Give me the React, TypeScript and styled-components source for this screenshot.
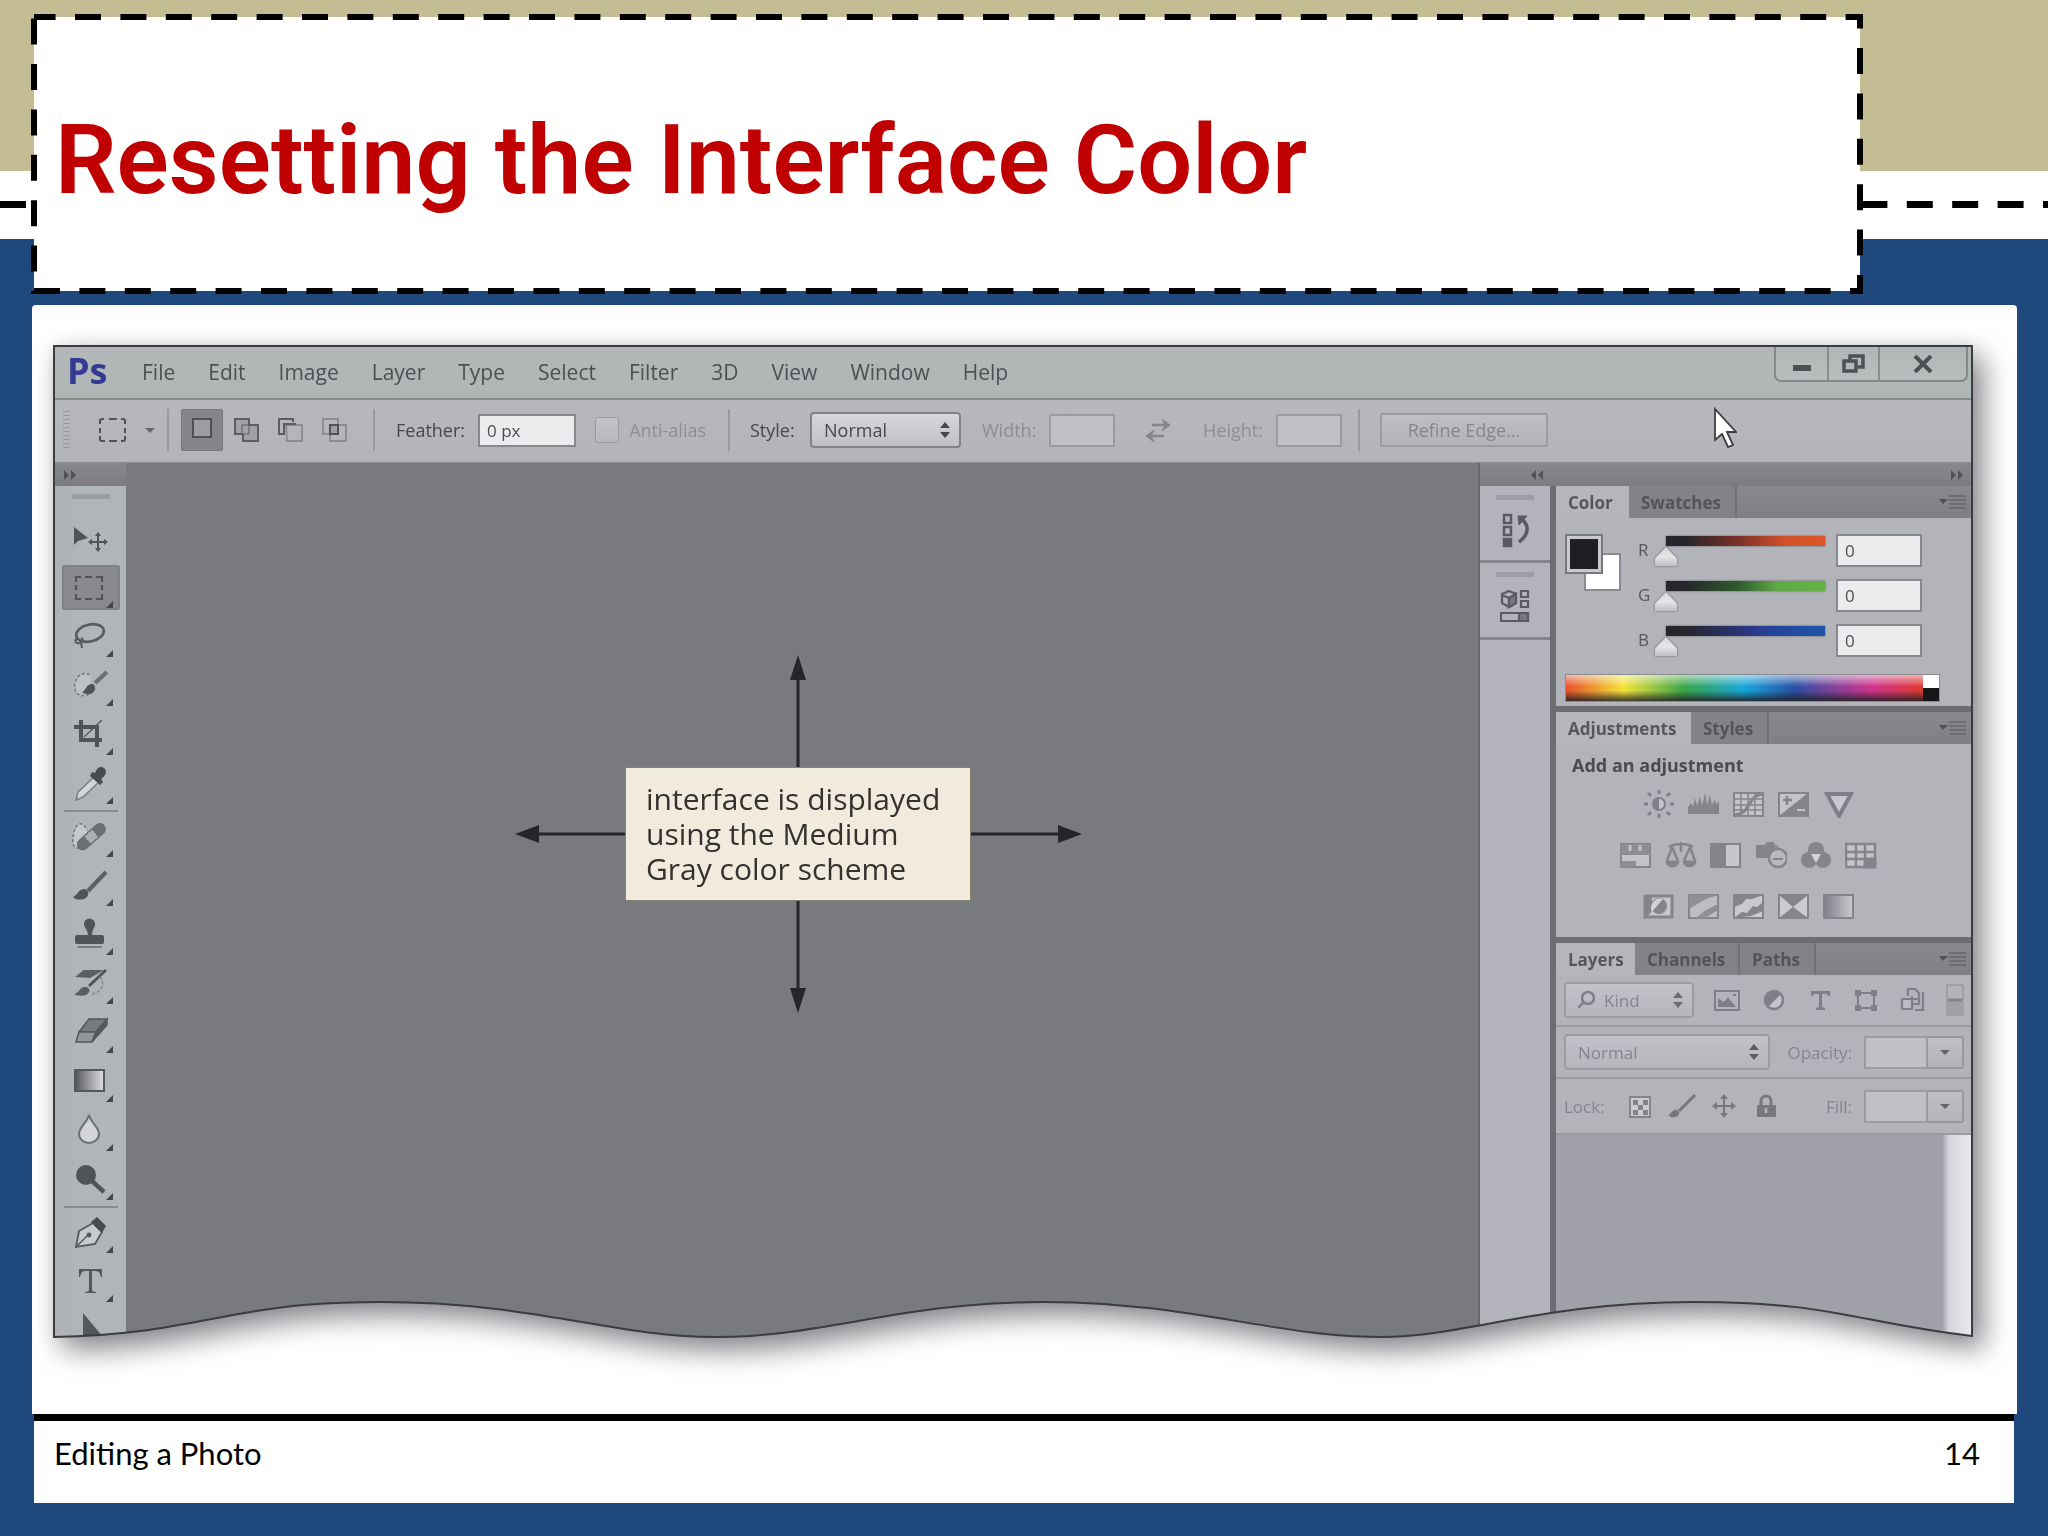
import React from "react";
import styled, { createGlobalStyle, css } from "styled-components";

const uiFont = `"Open Sans", "Noto Sans", sans-serif`;
const ink = "#55595d";
const faded = "#85868d";

const GlobalStyle = createGlobalStyle`
  *, *::before, *::after { box-sizing: border-box; }
  body { margin: 0; background: #1f497d; }
  button, input, select { font: inherit; color: inherit; margin: 0; border-radius: 0; }
  button { padding: 0; border: 0; background: none; cursor: pointer; }
  svg { display: block; }
`;

/* ---------- slide ---------- */

const Slide = styled.div`
  min-height: 100vh;
  display: flex;
  flex-direction: column;
  background: #1f497d;
  font-family: ${uiFont};
`;

const SlideHeader = styled.header`
  position: relative;
  padding: 14px 185px 11px 31px;
  background: linear-gradient(#c4bd93 171px, #fff 171px, #fff 239px, #1f497d 239px);
`;

const BandDashes = styled.svg`
  position: absolute;
  left: 0;
  top: 201px;
  width: 100%;
  height: 7px;
`;

const TitleBox = styled.div`
  position: relative;
  height: 280px;
  padding: 3px;
`;

const TitleFill = styled.div`
  height: 100%;
  display: flex;
  align-items: center;
  padding: 12px 21px 0;
  background: #fff;
`;

const TitleDashes = styled.svg`
  position: absolute;
  inset: 3px;
  width: calc(100% - 6px);
  height: calc(100% - 6px);
  overflow: visible;
`;

const Title = styled.h1`
  margin: 0;
  color: #c00000;
  font: 600 97px/112px Roboto, "Liberation Sans", sans-serif;
`;

const Figure = styled.main`
  margin: 0 31px 0 32px;
  padding: 40px 44px 76px 21px;
  background: #fff;
  border-radius: 4px 4px 0 0;
`;

const SlideFooter = styled.footer`
  display: flex;
  justify-content: space-between;
  margin: 0 34px 34px;
  padding: 12px 34px 28px 20px;
  height: 89px;
  border-top: 7px solid #000;
  background: #fff;
  color: #000;
  font: 400 31px/40px Lato, sans-serif;
`;

/* ---------- application window ---------- */

const WindowShadow = styled.div`
  position: relative;
  filter: drop-shadow(10px 12px 14px rgba(60, 60, 70, 0.6)) drop-shadow(0 0 8px rgba(120, 110, 100, 0.12));
`;

const AppWindow = styled.div`
  display: flex;
  flex-direction: column;
  border: 2px solid #3b3b40;
  border-bottom: 0;
  background: #b2b4b8;
  clip-path: url(#torn-edge);
  color: ${ink};
`;

const ShapeDefs = styled.svg`
  position: absolute;
`;

const TornOutline = styled.svg`
  position: absolute;
  inset: 0;
  width: 100%;
  height: 100%;
  pointer-events: none;
`;

const MenuBar = styled.nav`
  display: flex;
  align-items: flex-start;
  height: 53px;
  padding-left: 12px;
  background: linear-gradient(#b6b5b9, #b0b7b6 14px, #b0b6b6);
  border-bottom: 2px solid #88898d;
`;

const Logo = styled.span`
  width: 75px;
  color: #333a94;
  font-size: 36px;
  font-weight: 700;
  line-height: 48px;
`;

const Menus = styled.div`
  display: flex;
  flex: 1;
  gap: 33px;
`;

const MenuButton = styled.button`
  font-size: 21px;
  line-height: 50px;
  color: #4a5153;
`;

const WindowControls = styled.div`
  display: flex;
  height: 35px;
  margin-right: 3px;
  border: 2px solid #85878a;
  border-top: 0;
  border-radius: 0 0 7px 7px;
  background: linear-gradient(#b1b5b5, #b9bdbd);
`;

const ControlButton = styled.button<{ $wide?: boolean }>`
  width: ${(p) => (p.$wide ? 88 : 51)}px;
  display: flex;
  align-items: center;
  justify-content: center;
  & + & { border-left: 2px solid #8a8c8f; }
`;

const OptionsBar = styled.div`
  position: relative;
  display: flex;
  align-items: center;
  height: 63px;
  padding: 0 0 2px 8px;
  font-size: 18px;
  background: linear-gradient(#b6b8bc, #b2b4b9);
  border-bottom: 1px solid #8b8c90;
`;

const Grip = styled.span`
  width: 7px;
  height: 38px;
  background: repeating-linear-gradient(#96989c 0 1px, transparent 1px 4px);
`;

const IconButton = styled.button<{ $ml?: number; $w: number }>`
  display: flex;
  justify-content: center;
  width: ${(p) => p.$w}px;
  margin-left: ${(p) => p.$ml ?? 0}px;
`;

const ModeGroup = styled.div`
  display: flex;
  gap: 2px;
  margin: 0 18px 0 12px;
`;

const ModeButton = styled.button<{ $on?: boolean }>`
  display: flex;
  align-items: center;
  justify-content: center;
  width: 42px;
  height: 42px;
  border-radius: 3px;
  ${(p) => p.$on && css`background: #84868a; box-shadow: inset 0 0 0 1px #77797d;`}
`;

const Divider = styled.span<{ $ml?: number }>`
  width: 2px;
  height: 42px;
  margin-left: ${(p) => p.$ml ?? 0}px;
  background: #989a9e;
`;

const Field = styled.div<{ $ml: number; $w: number; $off?: boolean }>`
  display: flex;
  align-items: center;
  justify-content: space-between;
  width: ${(p) => p.$w}px;
  margin-left: ${(p) => p.$ml}px;
  white-space: nowrap;
  color: ${(p) => (p.$off ? "#8c8e94" : "#45484c")};
`;

const TextBox = styled.input<{ $w: number; $off?: boolean }>`
  width: ${(p) => p.$w}px;
  height: 33px;
  padding: 0 7px;
  border: 2px solid ${(p) => (p.$off ? "#9b9ca2" : "#87888d")};
  background: ${(p) => (p.$off ? "#c0c1c7" : "#ecebee")};
  color: #4c4d51;
  font-size: 17px;
`;

const CheckBox = styled.input`
  appearance: none;
  width: 24px;
  height: 26px;
  border: 1px solid #9b9ca0;
  border-radius: 3px;
  background: linear-gradient(#c3c4c8, #b7b8bc);
`;

const SelectFrame = styled.span<{ $w: number; $off?: boolean }>`
  display: flex;
  align-items: center;
  width: ${(p) => p.$w}px;
  height: 36px;
  padding: 0 8px 0 12px;
  border: 2px solid ${(p) => (p.$off ? "#9b9ca2" : "#808287")};
  border-radius: 4px;
  background: ${(p) => (p.$off ? "linear-gradient(#c2c3c9, #b5b6bc)" : "linear-gradient(#d6d7db, #bfc0c4)")};
`;

const Select = styled.select`
  flex: 1;
  min-width: 0;
  appearance: none;
  border: 0;
  padding: 0;
  background: none;
  opacity: 1;
`;

const PushButton = styled.button`
  width: 168px;
  height: 34px;
  margin-left: 20px;
  border: 2px solid #9c9da2;
  border-radius: 2px;
  background: linear-gradient(#bebfc4, #b3b4b9);
  color: #85878d;
`;

const Pointer = styled.svg`
  position: absolute;
  right: 234px;
  top: 7px;
`;

const Workspace = styled.div`
  display: flex;
  background: #797a7e;
`;

/* ---------- toolbox ---------- */

const Toolbox = styled.aside`
  width: 71px;
  background: linear-gradient(90deg, #aeb0b6, #b0b5b7 30%);
`;

const StripHeader = styled.div`
  display: flex;
  align-items: center;
  justify-content: space-between;
  height: 23px;
  padding: 0 8px;
  background: linear-gradient(#87898d, #7a7c80);
`;

const PanelGrip = styled.span<{ $gap: number }>`
  display: block;
  width: 38px;
  height: 5px;
  margin: 8px auto ${(p) => p.$gap}px;
  background: #9c9ea3;
`;

const Tool = styled.button<{ $on?: boolean; $cut?: boolean }>`
  position: relative;
  display: flex;
  align-items: ${(p) => (p.$cut ? "flex-start" : "center")};
  justify-content: center;
  width: 58px;
  height: ${(p) => (p.$cut ? 30 : 45)}px;
  margin: 0 auto 4px 7px;
  padding: 0 2px 2px 0;
  border-radius: 3px;
  ${(p) => p.$on && css`background: #888a8f; box-shadow: inset 0 0 0 2px #7f8186;`}
  ${(p) => p.$cut && css`margin-bottom: 0; padding-top: 5px;`}
`;

const FlyoutMark = styled.svg`
  position: absolute;
  right: 7px;
  bottom: 2px;
`;

const ToolRule = styled.hr`
  width: 54px;
  height: 2px;
  margin: 0 auto 2px 9px;
  border: 0;
  background: #888a8e;
`;

/* ---------- canvas ---------- */

const Canvas = styled.section`
  flex: 1;
  display: flex;
  justify-content: center;
  align-items: flex-start;
  padding: 192px 8px 0 0;
  border-right: 2px solid #66676c;
`;

const Callout = styled.div`
  position: relative;
  display: flex;
  align-items: center;
  justify-content: center;
  width: 567px;
  height: 358px;
`;

const CalloutArrows = styled.svg`
  position: absolute;
  inset: 0;
`;

const CalloutText = styled.p`
  position: relative;
  width: 346px;
  margin: 0;
  padding: 13px 20px 14px;
  border: 1px solid #85836f;
  background: #f0ebdd;
  color: #34322f;
  font: 500 30px/35px ${uiFont};
`;

/* ---------- right dock ---------- */

const Dock = styled.aside`
  display: flex;
  flex-direction: column;
  width: 491px;
`;

const DockHeader = styled(StripHeader)`
  padding: 0 7px 0 50px;
`;

const DockColumns = styled.div`
  flex: 1;
  display: flex;
`;

const IconDock = styled.div`
  width: 70px;
  background: #b3b4bb;
`;

const DockSlot = styled.div`
  height: 77px;
  padding-top: 1px;
  border-bottom: 3px solid #85868c;
`;

const DockIcon = styled.button`
  display: block;
  margin: 0 auto;
`;

const Panels = styled.div`
  flex: 1;
  display: flex;
  flex-direction: column;
  gap: 6px;
  border-left: 6px solid #6c6d73;
  background: #6c6d73;
`;

const Panel = styled.section<{ $grow?: boolean }>`
  display: flex;
  flex-direction: column;
  background: #b3b4ba;
  ${(p) => p.$grow && css`flex: 1;`}
`;

const Tabs = styled.div`
  display: flex;
  height: 32px;
  background: linear-gradient(#88898e, #7f8085);
`;

const Tab = styled.button<{ $w: number; $on?: boolean }>`
  width: ${(p) => p.$w}px;
  padding: 0 0 0 12px;
  text-align: left;
  font-size: 17px;
  font-weight: 700;
  color: ${(p) => (p.$on ? "#55575c" : "#53545a")};
  ${(p) => (p.$on ? css`background: #b5b6bb;` : css`border-right: 2px solid #717277; background: #828388;`)}
`;

const PanelMenu = styled.button`
  margin: 0 4px 0 auto;
`;

const ColorBody = styled.div`
  display: grid;
  grid-template-columns: 73px 17px 181px 86px;
  grid-auto-rows: 34px;
  row-gap: 11px;
  padding: 16px 0 0 9px;
`;

const Swatches = styled.div`
  grid-row: 1 / span 3;
`;

const ChannelLabel = styled.label`
  font-size: 17px;
  line-height: 32px;
`;

const Slider = styled.input<{ $to: string }>`
  appearance: none;
  width: 181px;
  height: 31px;
  margin-top: 2px;
  background: linear-gradient(90deg, #25262b 12%, ${(p) => p.$to}) 11px 0 / calc(100% - 22px) 10px no-repeat;
  filter: drop-shadow(0 0 1px #5c5d62);
  &::-webkit-slider-runnable-track { height: 31px; }
  &::-webkit-slider-thumb {
    appearance: none;
    width: 22px;
    height: 19px;
    margin-top: 11px;
    background: linear-gradient(#d5d5d8, #e6e6e8 50%, #bdbec2);
    clip-path: polygon(50% 0, 100% 60%, 100% 100%, 0 100%, 0 60%);
  }
`;

const Spectrum = styled.div`
  display: flex;
  height: 28px;
  margin: 16px 31px 4px 9px;
  border: 1px solid #8b8c90;
`;

const SpectrumRamp = styled.div`
  flex: 1;
  background:
    linear-gradient(rgba(255,255,255,0.6), rgba(255,255,255,0) 45%, rgba(0,0,0,0) 60%, rgba(30,30,34,0.85)),
    linear-gradient(90deg, #e5502b, #f3e33a 16%, #3ba648 33%, #16a6dc 50%, #2950a4 64%, #8a3f98 76%, #d0348a 86%, #dd3a2e);
`;

const SpectrumEnds = styled.div`
  width: 16px;
  background: linear-gradient(#fff 50%, #161618 50%);
`;

const AdjustBody = styled.div`
  height: 193px;
  padding: 8px 30px 0 0;
`;

const AdjustTitle = styled.h2`
  margin: 0 0 0 16px;
  font-size: 18px;
  line-height: 26px;
  font-weight: 700;
  color: #494b50;
`;

const AdjustRow = styled.div`
  display: flex;
  justify-content: center;
  gap: 13px;
  height: 51px;
  align-items: center;
`;

const LayerRow = styled.div<{ $tall?: boolean }>`
  display: flex;
  align-items: center;
  justify-content: space-between;
  height: ${(p) => (p.$tall ? 56 : 52)}px;
  padding: 0 7px 0 8px;
  border-bottom: 2px solid #9a9ba1;
  color: ${faded};
  font-size: 17px;
`;

const LayerGroup = styled.div<{ $gap: number }>`
  display: flex;
  align-items: center;
  gap: ${(p) => p.$gap}px;
`;

const LockLabel = styled.span`
  width: 47px;
`;

const Combo = styled.span`
  display: flex;
`;

const ComboButton = styled.button`
  width: 36px;
  height: 33px;
  display: flex;
  align-items: center;
  justify-content: center;
  border: 2px solid #97989e;
  border-left: 0;
  border-radius: 0 3px 3px 0;
  background: linear-gradient(#bfc0c6, #b3b4ba);
`;

const LayerList = styled.div`
  flex: 1;
  background: linear-gradient(90deg, #a0a0a8 calc(100% - 29px), #d6d7dc calc(100% - 22px), #e8e9ed);
`;

/* ---------- drawings ---------- */

const windowShape =
  "M1 1H1919V990C1800 976 1780 956 1640 956C1490 956 1410 991 1329 991C1220 991 1140 956 989 956C850 956 770 991 663 991C560 991 480 956 328 956C170 956 150 988 1 991Z";

const Chevrons = ({ left }: { left?: boolean }) => (
  <svg width="14" height="10" viewBox="0 0 14 10" fill="#505257">
    {left ? <path d="M6 0v10L1 5zM13 0v10L8 5z" /> : <path d="M1 0v10l5-5zM8 0v10l5-5z" />}
  </svg>
);

const UpDown = ({ color = "#44474b" }: { color?: string }) => (
  <svg width="12" height="18" viewBox="0 0 12 18" fill={color}>
    <path d="M6 1l5 6H1zM6 17l5-6H1z" />
  </svg>
);

const Caret = ({ small }: { small?: boolean }) => (
  <svg width={small ? 10 : 12} height={small ? 5 : 6} viewBox="0 0 12 6" fill={small ? "#66676c" : "#4b4d51"}><path d="M0 0h12L6 6z" /></svg>
);

const PanelMenuIcon = () => (
  <svg width="28" height="18" viewBox="0 0 28 18">
    <path d="M0 6h9L4 11z" fill="#505257" />
    <path d="M10 3h17M10 7h17M10 11h17M10 15h17" stroke="#65676c" strokeWidth="1.6" />
  </svg>
);

const MarqueeIcon = () => (
  <svg width="32" height="28" viewBox="0 0 32 28" fill="none" stroke="#4f5357" strokeWidth="2">
    <path d="M3 8V5q0-2 2-2h2M12 3h8M24 3h2q2 0 2 2v3M28 12v5M28 20v3q0 2-2 2h-2M20 25h-8M8 25H5q-2 0-2-2v-3M3 17v-5" />
  </svg>
);

const modeIcons: [string, React.ReactNode][] = [
  ["New selection", <rect key="a" x="4" y="2" width="18" height="18" fill="#9b9da1" stroke="#4f5155" />],
  ["Add to selection", <g key="b" fill="#a0a2a6" stroke="#5b5d61"><path d="M2 2h14v6h9v16H10v-7H2z" /><path d="M9 8h7v9H9z" strokeWidth="1" /></g>],
  ["Subtract from selection", <g key="c" fill="none"><path d="M9 8h16v16H10z" stroke="#8c8e92" /><path d="M16 5V2H2v15h5V7h12" stroke="#5b5d61" /></g>],
  ["Intersect with selection", <g key="d" fill="none"><path d="M2 2h15v15H2zM9 8h16v16H9z" stroke="#8c8e92" /><path d="M9 8h8v9H9z" stroke="#4f5155" fill="#9b9da1" /></g>],
];

const tools: { name: string; art: React.ReactNode; plain?: boolean; rule?: boolean; on?: boolean }[] = [
  { name: "Move", plain: true, art: <g><path d="M3 7v18l4-4 10-3z" fill="#4f5357" /><path d="M27 14v16M19 22h16" stroke="#4f5357" strokeWidth="2" /><path d="M27 12l-3 4h6zM27 32l-3-4h6zM17 22l4-3v6zM37 22l-4-3v6z" fill="#4f5357" /></g> },
  { name: "Rectangular marquee", on: true, art: <path d="M5 13V8h5M14 8h7M25 8h6v5M31 16v5M31 25v5h-6M21 30h-7M10 30H5v-5M5 21v-5" fill="none" stroke="#505358" strokeWidth="2.2" /> },
  { name: "Lasso", art: <g fill="none" stroke="#575b5f" strokeWidth="2.6"><ellipse cx="19" cy="15" rx="14" ry="8.5" transform="rotate(-12 19 15)" /><path d="M7 20c-4 2-3 6 1 5s5-4 2-5M10 24l1 6" strokeWidth="2" /></g> },
  { name: "Quick selection", art: <g><path d="M18 27c-10 5-16-2-14-11S15 4 20 9" fill="#bfc2c4" stroke="#74777b" strokeWidth="1.6" strokeDasharray="3 2" /><path d="M11 25c4-1 4-9 11-8 4 3 2 9-3 10-3 0-6 0-8-2z" fill="#4f5357" /><path d="M24 16L36 5" stroke="#6c6f73" strokeWidth="4" /></g> },
  { name: "Crop", art: <g fill="none" stroke="#505458" strokeWidth="4"><path d="M3 11h23v20M10 4v20h21" /><path d="M13 21L31 4" strokeWidth="1.2" /></g> },
  { name: "Eyedropper", rule: true, art: <g><path d="M23 12l5 5L12 32l-7 3 2-8z" fill="#d3d5d7" stroke="#7c7f83" strokeWidth="1.5" /><path d="M19 11l10 9 3-3-2-3c6-4 6-9 3-11s-7-1-9 5l-3-1z" fill="#484c50" /></g> },
  { name: "Healing brush", art: <g><path d="M13 28C2 34 0 25 3 14S12 4 16 12" fill="#c6c9ca" stroke="#74777b" strokeDasharray="3 2" strokeWidth="1.5" /><rect x="3" y="13" width="35" height="12" rx="6" fill="#6c6f73" transform="rotate(-42 20 19)" /><rect x="15" y="14" width="11" height="10" fill="#aeb1b3" stroke="#5a5d61" strokeDasharray="2 1.5" transform="rotate(-42 20 19)" /></g> },
  { name: "Brush", art: <g><path d="M2 30c5-2 5-8 12-8 5 2 4 8-1 10-5 1-8 1-11-2z" fill="#4f5357" /><path d="M17 24L35 5" stroke="#5d6165" strokeWidth="4" /></g> },
  { name: "Clone stamp", art: <g fill="#505458"><path d="M13 8c0-7 11-7 11 0 0 4-3 5-3 12h-4c0-7-4-8-4-12z" /><rect x="4" y="19" width="29" height="9" rx="2" /><path d="M6 30h25v2H6z" fill="#7b7e82" /></g> },
  { name: "History brush", art: <g><path d="M4 12L13 5h20l-14 8zM3 29c6-1 5-8 12-7 5 1 4 6 0 8-4 1-9 1-12-1z" fill="#5a5d61" /><path d="M18 21L35 5" stroke="#505458" strokeWidth="3" /><path d="M29 12c6 8 1 15-8 17" fill="none" stroke="#8b8e91" strokeWidth="2" strokeDasharray="3 2" /></g> },
  { name: "Eraser", art: <g stroke="#54575b" strokeWidth="1.5"><path d="M18 5h18L25 18H8z" fill="#777a7e" /><path d="M8 18h17l-4 10H5z" fill="#94979a" /><path d="M25 18L36 5v6L21 28z" fill="#55585c" /></g> },
  { name: "Gradient", art: <g><defs><linearGradient id="tool-gradient"><stop offset="0" stopColor="#54575b" /><stop offset="1" stopColor="#dfe0e2" /></linearGradient></defs><rect x="4" y="7" width="29" height="21" fill="url(#tool-gradient)" stroke="#54575b" strokeWidth="2" /></g> },
  { name: "Blur", art: <path d="M18 3c2 8 10 12 10 19a10 9 0 0 1-20 0c0-7 8-11 10-19z" fill="#d3d5d7" stroke="#6c6f73" strokeWidth="2" /> },
  { name: "Dodge", rule: true, art: <g><circle cx="15" cy="14" r="10" fill="#505458" /><path d="M21 20l12 11" stroke="#505458" strokeWidth="4.5" /></g> },
  { name: "Pen", art: <g><path d="M5 33L8 17 22 9l9 9-7 12z" fill="#c8cacc" stroke="#54575b" strokeWidth="1.8" /><path d="M5 33l12-12" stroke="#54575b" strokeWidth="1.5" /><circle cx="18" cy="21" r="2.4" fill="#54575b" /><path d="M20 8l6-5 9 9-4 7z" fill="#484c50" /></g> },
];

const adjustments: [string, React.ReactNode][][] = [
  [
    ["Brightness", <g key="1"><circle cx="16" cy="14" r="6" fill="#c6c7cd" stroke="#7f8087" strokeWidth="2" /><path d="M16 8a6 6 0 0 0 0 12z" fill="#7f8087" /><path d="M16 0v4M16 24v4M1 14h4M27 14h4M5 3l3 3M24 22l3 3M5 25l3-3M24 6l3-3" stroke="#7f8087" strokeWidth="3" /></g>],
    ["Levels", <path key="2" d="M0 24V17l3-4 2 4 2-9 2 8 3-10 2 10 3-13 2 12 3-10 2 10 3-6 1 5 3-3v13z" fill="#84858b" />],
    ["Curves", <g key="3" fill="none" stroke="#84858b"><rect x="1" y="3" width="29" height="23" fill="#c3c4ca" strokeWidth="2" /><path d="M8 3v23M15 3v23M22 3v23M1 9h29M1 15h29M1 20h29" strokeWidth="1.5" /><path d="M2 25C18 24 14 6 29 4" strokeWidth="3" /></g>],
    ["Exposure", <g key="4"><rect x="1" y="3" width="29" height="23" fill="#c3c4ca" stroke="#84858b" strokeWidth="2" /><path d="M1 26L30 3v23z" fill="#84858b" /><path d="M5 10h9M9 6v9" stroke="#84858b" strokeWidth="2.5" /><path d="M19 20h8" stroke="#c3c4ca" strokeWidth="2" /></g>],
    ["Vibrance", <path key="5" d="M4 4h24L16 26z" fill="#c8c9ce" stroke="#7f8087" strokeWidth="4" />],
  ],
  [
    ["Hue and saturation", <g key="1"><rect x="1" y="3" width="29" height="23" fill="#c3c4ca" stroke="#84858b" strokeWidth="2" /><path d="M1 3h29v11H1zM1 20h15v6H1z" fill="#8d8e94" /><path d="M10 4v6M20 4v6" stroke="#c3c4ca" strokeWidth="3" /></g>],
    ["Color balance", <g key="2" fill="none" stroke="#84858b" strokeWidth="2.5"><path d="M16 1v10M4 6c6-4 18-4 24 0M7 6L2 20M7 6l6 14M25 6l-6 14M25 6l5 14" /><path d="M1 20h13c0 8-13 8-13 0zM18 20h13c0 8-13 8-13 0z" fill="#84858b" strokeWidth="1" /></g>],
    ["Black and white", <g key="3"><rect x="1" y="3" width="29" height="23" fill="#c6c7cc" stroke="#84858b" strokeWidth="2" /><path d="M1 3h15v23H1z" fill="#84858b" /></g>],
    ["Photo filter", <g key="4"><path d="M1 4h8l3-3h7v16H1z" fill="#84858b" /><circle cx="18" cy="10" r="7" fill="#84858b" opacity=".8" /><circle cx="23" cy="17" r="9" fill="#b9bac0" stroke="#84858b" strokeWidth="2.5" /><path d="M18 18h10" stroke="#84858b" strokeWidth="2" /></g>],
    ["Channel mixer", <g key="5" fill="#84858b"><circle cx="16" cy="9" r="8" /><circle cx="9" cy="19" r="8" /><circle cx="23" cy="19" r="8" /><path d="M11 13h10l-5 9z" fill="#d3d4d8" /></g>],
    ["Color lookup", <g key="6" fill="none" stroke="#84858b" strokeWidth="2.5"><rect x="1" y="3" width="29" height="23" fill="#c3c4ca" /><path d="M11 3v23M20 3v23M1 11h29M1 18h29" /><path d="M20 18h10v8H20z" fill="#84858b" /></g>],
  ],
  [
    ["Invert", <g key="1"><rect x="2" y="4" width="27" height="21" fill="#c6c7cc" stroke="#84858b" strokeWidth="3" /><path d="M2 4h7v15l-5 6H2z" fill="#84858b" /><circle cx="16" cy="14" r="8" fill="#84858b" /><path d="M9 20a9 9 0 0 1 2-11c3-3 7-3 9-2z" fill="#d0d1d6" /></g>],
    ["Posterize", <g key="2"><rect x="1" y="3" width="29" height="23" fill="#bdbec4" stroke="#84858b" strokeWidth="2" /><path d="M1 17L18 7l12-4H1zM8 26l10-8 12-6v6l-13 8z" fill="#8f9096" /></g>],
    ["Threshold", <g key="3"><rect x="1" y="3" width="29" height="23" fill="#c9cacf" stroke="#84858b" strokeWidth="2" /><path d="M1 15l8-3 4-5 6 0 11-4H1zM1 26l8-6 5 1 6-7 4 1 6-5v9L18 24z" fill="#84858b" /></g>],
    ["Selective color", <g key="4"><rect x="1" y="3" width="29" height="23" fill="#cbccd1" stroke="#84858b" strokeWidth="2" /><path d="M1 3h29L15 15zM1 26h29L15 15z" fill="#84858b" /></g>],
    ["Gradient map", <g key="5"><defs><linearGradient id="map-ramp"><stop offset="0" stopColor="#7f8087" /><stop offset="1" stopColor="#cacbd0" /></linearGradient></defs><rect x="1" y="3" width="29" height="23" fill="url(#map-ramp)" stroke="#84858b" strokeWidth="2" /></g>],
  ],
];

const filters: [string, React.ReactNode][] = [
  ["Pixel layers", <g key="1" fill="none" stroke="#7f8087" strokeWidth="2"><rect x="1" y="4" width="24" height="19" /><path d="M5 19v-6l5 3 4-4 6 7z" fill="#7f8087" /><path d="M19 8h3" /></g>],
  ["Adjustment layers", <g key="2"><circle cx="13" cy="13" r="9" fill="#c3c4ca" stroke="#7f8087" strokeWidth="2.5" /><path d="M7 20A9 9 0 0 1 20 7z" fill="#7f8087" /></g>],
  ["Type layers", <path key="3" d="M4 4h19v5h-2l-1-2h-5v13l3 1v2H9v-2l3-1V7H7L6 9H4z" fill="#7f8087" />],
  ["Shape layers", <g key="4" fill="#7f8087"><path d="M5 6h16v15H5z" fill="none" stroke="#7f8087" strokeWidth="2" /><path d="M2 3h6v6H2zM18 3h6v6h-6zM2 18h6v6H2zM18 18h6v6h-6z" /></g>],
  ["Smart objects", <g key="5" fill="none" stroke="#7f8087" strokeWidth="2.2"><path d="M8 9V2h7l4 4v11h-7" /><path d="M2 12h10v10H2z" fill="#bbbcc2" /><path d="M12 9v8M12 12h7M23 5v18h-8" /></g>],
];

const locks: [string, React.ReactNode][] = [
  ["Lock transparent pixels", <g key="1" fill="#84858b"><rect x="2" y="3" width="20" height="20" fill="#cbccd1" stroke="#84858b" strokeWidth="2" /><path d="M5 6h5v5H5zM15 6h5v5h-5zM10 11h5v5h-5zM5 16h5v5H5zM15 16h5v5h-5z" /></g>],
  ["Lock image pixels", <g key="2"><path d="M-2 21c4-1 4-6 9-5 4 2 2 6-1 7-4 1-6 0-8-2z" fill="#77787e" /><path d="M9 17L25 1" stroke="#77787e" strokeWidth="3" /></g>],
  ["Lock position", <path key="3" d="M12 0l4 5h-3v6h6V8l5 4-5 4v-3h-6v6h3l-4 5-4-5h3v-6H5v3l-5-4 5-4v3h6V5H8z" fill="#77787e" />],
  ["Lock all", <g key="4"><path d="M7 12V7a5 5 0 0 1 10 0v5" fill="none" stroke="#77787e" strokeWidth="3" /><rect x="3" y="11" width="19" height="12" rx="1" fill="#77787e" /><path d="M12 14v5" stroke="#b3b4ba" strokeWidth="2.5" /></g>],
];

const channels = [
  { id: "R", to: "#7a3026 45%, #d2512a 75%, #de5428" },
  { id: "G", to: "#2f5a2f 45%, #5fa845 70%, #67b247" },
  { id: "B", to: "#2b3478 48%, #25429a 65%, #1f56a8" },
];

/* ---------- parts ---------- */

function OptionsStrip() {
  return (
    <OptionsBar>
      <Grip />
      <IconButton $ml={27} $w={32} aria-label="Marquee preset"><MarqueeIcon /></IconButton>
      <IconButton $ml={14} $w={14} aria-label="Preset list"><Caret small /></IconButton>
      <Divider $ml={10} />
      <ModeGroup>
        {modeIcons.map(([name, art], i) => (
          <ModeButton key={name} aria-label={name} $on={i === 0}>
            <svg width="27" height="26" viewBox="0 0 27 26" strokeWidth="2">{art}</svg>
          </ModeButton>
        ))}
      </ModeGroup>
      <Divider />
      <Field $ml={21} $w={180}>
        <label htmlFor="feather">Feather:</label>
        <TextBox id="feather" $w={98} defaultValue="0 px" />
      </Field>
      <Field $ml={19} $w={111} $off>
        <CheckBox id="anti" type="checkbox" disabled />
        <label htmlFor="anti">Anti-alias</label>
      </Field>
      <Divider $ml={22} />
      <Field $ml={20} $w={211}>
        <label htmlFor="style">Style:</label>
        <SelectFrame $w={151}>
          <Select id="style" defaultValue="Normal"><option>Normal</option></Select>
          <UpDown />
        </SelectFrame>
      </Field>
      <Field $ml={21} $w={133} $off>
        <label htmlFor="width">Width:</label>
        <TextBox id="width" $w={66} $off disabled />
      </Field>
      <IconButton $ml={29} $w={28} aria-label="Swap width and height">
        <svg width="28" height="26" viewBox="0 0 28 26" fill="#84868b" stroke="#84868b" strokeWidth="2.5">
          <path d="M8 8h12M8 19h12" />
          <path d="M18 2l8 6-8 6 3-6zM10 13l-8 6 8 6-3-6z" strokeWidth="1" />
        </svg>
      </IconButton>
      <Field $ml={31} $w={139} $off>
        <label htmlFor="height">Height:</label>
        <TextBox id="height" $w={66} $off disabled />
      </Field>
      <Divider $ml={16} />
      <PushButton>Refine Edge...</PushButton>
      <Pointer width="24" height="42" viewBox="0 0 24 42">
        <path d="M2 2v31l7-6 6 13 5-2-6-13h9z" fill="#fff" stroke="#3c3d41" strokeWidth="1.8" />
      </Pointer>
    </OptionsBar>
  );
}

const Flyout = () => (
  <FlyoutMark width="7" height="7" viewBox="0 0 7 7"><path d="M7 0v7H0z" fill="#44474b" /></FlyoutMark>
);

function ToolboxColumn() {
  return (
    <Toolbox>
      <StripHeader><Chevrons /></StripHeader>
      <PanelGrip $gap={17} />
      {tools.map((t) => (
        <React.Fragment key={t.name}>
          <Tool aria-label={t.name} $on={t.on}>
            <svg width="38" height="36" viewBox="0 0 38 36">{t.art}</svg>
            {!t.plain && <Flyout />}
          </Tool>
          {t.rule && <ToolRule />}
        </React.Fragment>
      ))}
      <Tool aria-label="Type">
        <svg width="38" height="36" viewBox="0 0 38 36">
          <path d="M8 6h23v8h-1c-1-4-2-6-6-6h-3v18c0 2 1 3 4 3v1H14v-1c3 0 4-1 4-3V8h-3c-4 0-5 2-6 6H8z" fill="#54585c" />
        </svg>
        <Flyout />
      </Tool>
      <Tool aria-label="Path selection" $cut>
        <svg width="38" height="24" viewBox="0 0 38 24"><path d="M12 0v24h20z" fill="#54585c" /></svg>
      </Tool>
    </Toolbox>
  );
}

function ColorPanel() {
  return (
    <Panel>
      <Tabs role="tablist">
        <Tab role="tab" $w={73} $on>Color</Tab>
        <Tab role="tab" $w={108}>Swatches</Tab>
        <PanelMenu aria-label="Color panel menu"><PanelMenuIcon /></PanelMenu>
      </Tabs>
      <ColorBody>
        <Swatches>
          <svg width="58" height="58" viewBox="0 0 58 58">
            <rect x="20" y="20" width="35" height="36" fill="#fff" stroke="#8a8b90" strokeWidth="2" />
            <rect x="1" y="1" width="36" height="38" fill="#c9cace" stroke="#77787d" strokeWidth="2" />
            <rect x="5" y="5" width="28" height="30" fill="#211d25" />
          </svg>
        </Swatches>
        {channels.map((c) => (
          <React.Fragment key={c.id}>
            <ChannelLabel htmlFor={`slide-${c.id}`}>{c.id}</ChannelLabel>
            <Slider id={`slide-${c.id}`} type="range" min={0} max={255} defaultValue={0} $to={c.to} />
            <TextBox $w={86} aria-label={`${c.id} value`} defaultValue="0" />
          </React.Fragment>
        ))}
      </ColorBody>
      <Spectrum><SpectrumRamp /><SpectrumEnds /></Spectrum>
    </Panel>
  );
}

function AdjustmentsPanel() {
  return (
    <Panel>
      <Tabs role="tablist">
        <Tab role="tab" $w={135} $on>Adjustments</Tab>
        <Tab role="tab" $w={78}>Styles</Tab>
        <PanelMenu aria-label="Adjustments panel menu"><PanelMenuIcon /></PanelMenu>
      </Tabs>
      <AdjustBody>
        <AdjustTitle>Add an adjustment</AdjustTitle>
        {adjustments.map((row, i) => (
          <AdjustRow key={i}>
            {row.map(([name, art]) => (
              <button key={name} aria-label={name}>
                <svg width="32" height="28" viewBox="0 0 32 28">{art}</svg>
              </button>
            ))}
          </AdjustRow>
        ))}
      </AdjustBody>
    </Panel>
  );
}

function ComboField({ id, label }: { id: string; label: string }) {
  return (
    <LayerGroup $gap={12}>
      <label htmlFor={id}>{label}</label>
      <Combo>
        <TextBox id={id} $w={64} $off disabled />
        <ComboButton aria-label={`${label} slider`}><Caret small /></ComboButton>
      </Combo>
    </LayerGroup>
  );
}

function LayersPanel() {
  return (
    <Panel $grow>
      <Tabs role="tablist">
        <Tab role="tab" $w={79} $on>Layers</Tab>
        <Tab role="tab" $w={105}>Channels</Tab>
        <Tab role="tab" $w={76}>Paths</Tab>
        <PanelMenu aria-label="Layers panel menu"><PanelMenuIcon /></PanelMenu>
      </Tabs>
      <LayerRow>
        <SelectFrame $w={130} $off>
          <svg width="26" height="20" viewBox="0 0 26 20" fill="none" stroke="#7f8087" strokeWidth="2.5">
            <circle cx="10" cy="8" r="6" /><path d="M6 12l-6 6" />
          </svg>
          <Select aria-label="Filter kind" defaultValue="Kind"><option>Kind</option></Select>
          <UpDown color="#6c6d73" />
        </SelectFrame>
        {filters.map(([name, art]) => (
          <button key={name} aria-label={name}><svg width="26" height="26" viewBox="0 0 26 26">{art}</svg></button>
        ))}
        <button aria-label="Filter switch">
          <svg width="18" height="32" viewBox="0 0 18 32">
            <rect x="1" y="1" width="16" height="30" fill="#a0a1a7" stroke="#9c9da3" strokeWidth="1.5" />
            <rect x="2" y="2" width="14" height="13" fill="#b3b4ba" />
            <path d="M2 16h14" stroke="#85868c" strokeWidth="3" />
          </svg>
        </button>
      </LayerRow>
      <LayerRow>
        <SelectFrame $w={206} $off>
          <Select aria-label="Blend mode" defaultValue="Normal"><option>Normal</option></Select>
          <UpDown color="#5c5d63" />
        </SelectFrame>
        <ComboField id="opacity" label="Opacity:" />
      </LayerRow>
      <LayerRow $tall>
        <LayerGroup $gap={17}>
          <LockLabel>Lock:</LockLabel>
          {locks.map(([name, art]) => (
            <button key={name} aria-label={name}>
              <svg width="25" height="25" viewBox="0 0 25 25" overflow="visible">{art}</svg>
            </button>
          ))}
        </LayerGroup>
        <ComboField id="fill" label="Fill:" />
      </LayerRow>
      <LayerList />
    </Panel>
  );
}

const menus = ["File", "Edit", "Image", "Layer", "Type", "Select", "Filter", "3D", "View", "Window", "Help"];

export default function App() {
  return (
    <Slide>
      <GlobalStyle />
      <SlideHeader>
        <BandDashes>
          <line x1="0" x2="100%" y1="3.5" y2="3.5" stroke="#000" strokeWidth="7" strokeDasharray="26 19.4" />
        </BandDashes>
        <TitleBox>
          <TitleFill><Title>Resetting the Interface Color</Title></TitleFill>
          <TitleDashes>
            <rect width="100%" height="100%" fill="none" stroke="#000" strokeWidth="6" strokeDasharray="26 19.4" strokeDashoffset="4.4" />
          </TitleDashes>
        </TitleBox>
      </SlideHeader>

      <Figure>
        <ShapeDefs width="0" height="0" aria-hidden="true">
          <clipPath id="torn-edge" clipPathUnits="objectBoundingBox">
            <path d={windowShape} transform={`scale(${1 / 1920} ${1 / 992})`} />
          </clipPath>
        </ShapeDefs>
        <WindowShadow>
          <AppWindow>
            <MenuBar>
              <Logo>Ps</Logo>
              <Menus>{menus.map((m) => <MenuButton key={m}>{m}</MenuButton>)}</Menus>
              <WindowControls>
                <ControlButton aria-label="Minimize">
                  <svg width="20" height="22" viewBox="0 0 20 22"><rect x="1" y="12" width="18" height="6" fill="#4b5154" /></svg>
                </ControlButton>
                <ControlButton aria-label="Restore">
                  <svg width="24" height="20" viewBox="0 0 24 20" fill="none" stroke="#4b5154" strokeWidth="3.5">
                    <path d="M8 6V2h13v11h-5M2 7h12v10H2z" />
                  </svg>
                </ControlButton>
                <ControlButton $wide aria-label="Close">
                  <svg width="20" height="18" viewBox="0 0 20 18"><path d="M2 1l16 16M18 1L2 17" stroke="#4b5154" strokeWidth="4" /></svg>
                </ControlButton>
              </WindowControls>
            </MenuBar>
            <OptionsStrip />
            <Workspace>
              <ToolboxColumn />
              <Canvas>
                <Callout>
                  <CalloutArrows width="567" height="358" viewBox="0 0 567 358" fill="#25262c">
                    <path d="M283 20v318M20 179h527" stroke="#25262c" strokeWidth="3" />
                    <path d="M283 0l8 25h-16zM283 358l8-25h-16zM0 179l24-9v18zM567 179l-24-9v18z" />
                  </CalloutArrows>
                  <CalloutText>interface is displayed using the Medium Gray color scheme</CalloutText>
                </Callout>
              </Canvas>
              <Dock>
                <DockHeader><Chevrons left /><Chevrons /></DockHeader>
                <DockColumns>
                  <IconDock>
                    <DockSlot>
                      <PanelGrip $gap={12} />
                      <DockIcon aria-label="History">
                        <svg width="30" height="36" viewBox="0 0 30 36" fill="none" stroke="#595b60" strokeWidth="2.5">
                          <path d="M4 3h7v8H4zM4 15h7v8H4z" /><path d="M4 27h7v7H4z" fill="#595b60" />
                          <path d="M19 30c11-8 10-18 2-23" strokeWidth="3.5" /><path d="M18 4h9l-8 9z" fill="#595b60" strokeWidth="1" />
                        </svg>
                      </DockIcon>
                    </DockSlot>
                    <DockSlot>
                      <PanelGrip $gap={12} />
                      <DockIcon aria-label="Properties">
                        <svg width="30" height="34" viewBox="0 0 30 34" fill="none" stroke="#595b60" strokeWidth="2.2">
                          <path d="M9 2l7 3v9l-7 4-7-4V5zM2 6l7 3 7-3M9 9v9" /><path d="M9 9l7-4v9l-7 4z" fill="#77797e" />
                          <path d="M21 2h7v6h-7zM21 12h7v6h-7zM1 24h27v8H1z" /><path d="M19 24h9v8h-9z" fill="#77797e" />
                        </svg>
                      </DockIcon>
                    </DockSlot>
                  </IconDock>
                  <Panels>
                    <ColorPanel />
                    <AdjustmentsPanel />
                    <LayersPanel />
                  </Panels>
                </DockColumns>
              </Dock>
            </Workspace>
          </AppWindow>
          <TornOutline viewBox="0 0 1920 992" preserveAspectRatio="none">
            <path d={windowShape} fill="none" stroke="#3b3b40" strokeWidth="2" vectorEffect="non-scaling-stroke" />
          </TornOutline>
        </WindowShadow>
      </Figure>

      <SlideFooter>
        <span>Editing a Photo</span>
        <span>14</span>
      </SlideFooter>
    </Slide>
  );
}
